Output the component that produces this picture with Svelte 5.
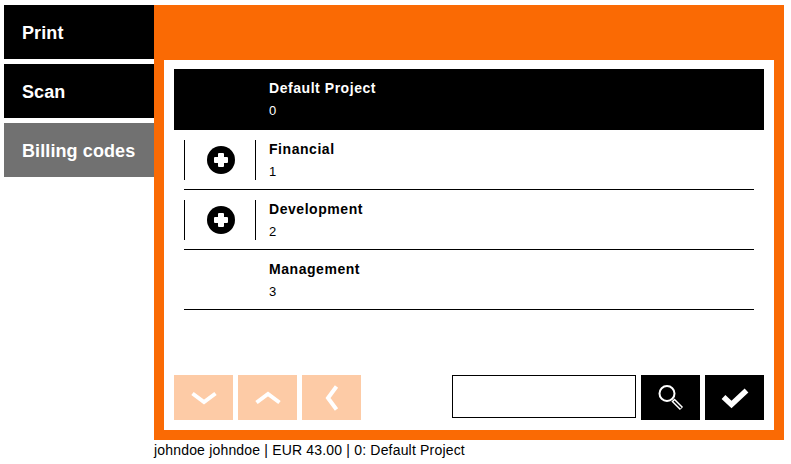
<script>
  const tabs = [
    { label: 'Print', active: false },
    { label: 'Scan', active: false },
    { label: 'Billing codes', active: true }
  ];

  const projects = [
    { name: 'Default Project', code: 0, selected: true, expand: false },
    { name: 'Financial', code: 1, selected: false, expand: true },
    { name: 'Development', code: 2, selected: false, expand: true },
    { name: 'Management', code: 3, selected: false, expand: false }
  ];
</script>

<div class="page">
  <nav class="tabs">
    {#each tabs as tab}
      <button type="button" class="tab" class:active={tab.active}>{tab.label}</button>
    {/each}
  </nav>

  <div class="right">
    <main class="frame">
      <div class="panel">
        <ul class="list">
          {#each projects as project}
            <li class="row" class:selected={project.selected}>
              <div class="toggle" class:lined={project.expand}>
                {#if project.expand}
                  <svg width="28" height="28" viewBox="0 0 28 28">
                    <circle cx="14" cy="14" r="14" fill="#000" />
                    <rect x="11" y="7" width="6" height="14" rx="1" fill="#fff" />
                    <rect x="7" y="11" width="14" height="6" rx="1" fill="#fff" />
                  </svg>
                {/if}
              </div>
              <div class="info">
                <span class="name">{project.name}</span>
                <span class="code">{project.code}</span>
              </div>
            </li>
          {/each}
        </ul>

        <div class="toolbar">
          <div class="group">
            <button type="button" class="btn faded" aria-label="Down">
              <svg width="26" height="14" viewBox="0 0 26 14">
                <path d="M1.500 2.500 13 11 24.500 2.500" fill="none" stroke="#fff" stroke-width="4" />
              </svg>
            </button>
            <button type="button" class="btn faded" aria-label="Up">
              <svg width="26" height="14" viewBox="0 0 26 14">
                <path d="M1.500 11.500 13 3 24.500 11.500" fill="none" stroke="#fff" stroke-width="4" />
              </svg>
            </button>
            <button type="button" class="btn faded" aria-label="Back">
              <svg width="14" height="26" viewBox="0 0 14 26">
                <path d="M11.500 1.500 3 13 11.500 24.500" fill="none" stroke="#fff" stroke-width="4" />
              </svg>
            </button>
          </div>
          <div class="group">
            <input class="search" type="text" aria-label="Search" />
            <button type="button" class="btn" aria-label="Search">
              <svg width="26" height="27" viewBox="0 0 26 27">
                <circle cx="9" cy="9.500" r="7.500" fill="none" stroke="#fff" stroke-width="2" />
                <path d="M15 16 23.500 24.500" stroke="#fff" stroke-width="4.500" />
                <path d="M16 17 23 24" stroke="#000" stroke-width="1.500" />
              </svg>
            </button>
            <button type="button" class="btn" aria-label="Confirm">
              <svg width="28" height="22" viewBox="0 0 28 22">
                <path d="M2.500 10 10.500 17.500 25.500 3.500" fill="none" stroke="#fff" stroke-width="5.500" />
              </svg>
            </button>
          </div>
        </div>
      </div>
    </main>
    <p class="status">johndoe johndoe | EUR 43.00 | 0: Default Project</p>
  </div>
</div>

<style>
  :global(body) {
    background: #fff;
  }

  .page {
    display: flex;
    padding: 5px 0 0 4px;
    font-family: 'Liberation Sans', Arial, sans-serif;
    color: #000;
  }

  .tabs {
    display: flex;
    flex-direction: column;
    gap: 5px;
    width: 150px;
  }

  .tab {
    height: 54px;
    border: 0;
    padding: 2px 0 0 18px;
    background: #000;
    color: #fff;
    font: bold 18px 'Liberation Sans', Arial, sans-serif;
    letter-spacing: 0.1px;
    text-align: left;
  }

  .tab.active {
    background: #717171;
  }

  .right {
    width: 630px;
  }

  .frame {
    background: #fa6a04;
    padding: 55px 10px 10px;
  }

  .panel {
    display: flex;
    flex-direction: column;
    height: 370px;
    box-sizing: border-box;
    background: #fff;
    padding: 9px 10px 10px;
  }

  .list {
    flex: 1;
    margin: 0;
    padding: 0;
    list-style: none;
  }

  .row {
    display: flex;
    box-sizing: border-box;
    height: 60px;
    margin: 0 10px;
    border-bottom: 1px solid #000;
    padding-top: 10px;
  }

  .row.selected {
    height: 61px;
    margin: 0;
    padding-left: 10px;
    border-bottom: 0;
    background: #000;
    color: #fff;
  }

  .toggle {
    display: flex;
    align-items: center;
    justify-content: center;
    box-sizing: border-box;
    width: 72px;
    height: 40px;
  }

  .toggle.lined {
    border-left: 1px solid #000;
    border-right: 1px solid #000;
    padding-left: 1px;
  }

  .info {
    display: flex;
    flex-direction: column;
    gap: 6px;
    margin-left: 13px;
  }

  .name {
    font-size: 14px;
    font-weight: bold;
    line-height: 18px;
    letter-spacing: 0.55px;
  }

  .code {
    font-size: 13px;
    line-height: 15px;
  }

  .toolbar {
    display: flex;
    justify-content: space-between;
    align-items: flex-start;
    height: 45px;
  }

  .group {
    display: flex;
    gap: 5px;
  }

  .btn {
    display: flex;
    align-items: center;
    justify-content: center;
    width: 59px;
    height: 45px;
    border: 0;
    padding: 0;
    background: #000;
  }

  .btn.faded {
    background: #fdcba6;
  }

  .search {
    box-sizing: border-box;
    width: 184px;
    height: 43px;
    border: 1px solid #000;
    padding: 0 4px;
    background: #fff;
    outline: none;
  }

  .status {
    margin: 2px 0 0;
    font-size: 14px;
    line-height: 16px;
    letter-spacing: 0.18px;
  }
</style>
